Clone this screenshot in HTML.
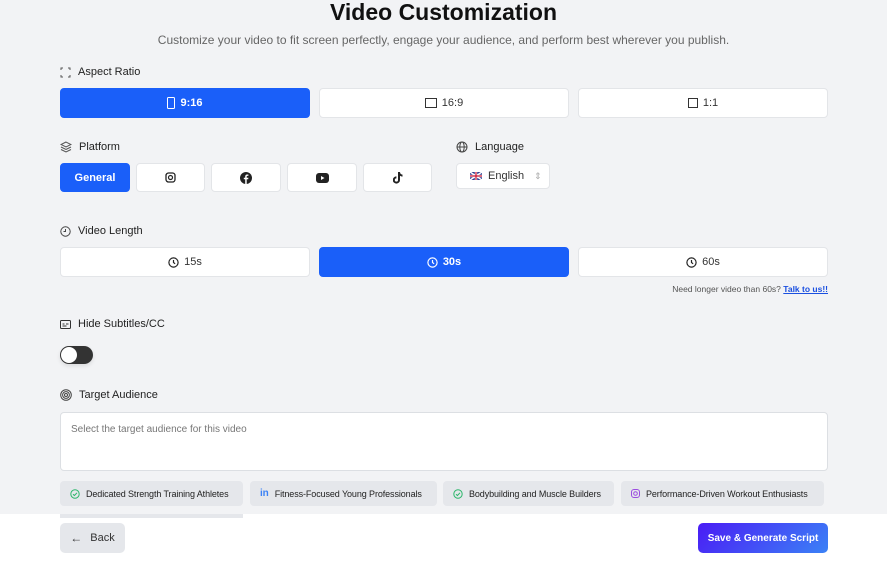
<!DOCTYPE html>
<html><head><style>
*{box-sizing:border-box;margin:0;padding:0}
body{width:887px;height:562px;background:#f2f3f5;font-family:"Liberation Sans",sans-serif;color:#222;position:relative;overflow:hidden}
.a{position:absolute}
.btn{position:absolute;background:#fff;border:1px solid #e3e5e8;border-radius:4px;display:flex;align-items:center;justify-content:center;font-size:11px;color:#333;gap:5px}
.on{background:#1a5ff9;border-color:#1a5ff9;color:#fff;font-weight:bold}
.lbl{position:absolute;font-size:11px;color:#222;display:flex;align-items:center;gap:7px}
.chip{position:absolute;top:481px;height:25px;background:#e5e7eb;border-radius:4px;font-size:9px;display:flex;align-items:center;gap:6px;padding-left:10px;color:#222;letter-spacing:-0.1px}
svg{display:block}
</style></head><body>
<div class="a" style="left:0;width:887px;top:-1px;text-align:center;font-size:23px;font-weight:bold;color:#111">Video Customization</div>
<div class="a" style="left:0;width:887px;top:33px;text-align:center;font-size:12px;color:#666">Customize your video to fit screen perfectly, engage your audience, and perform best wherever you publish.</div>

<div class="lbl" style="left:60px;top:66px"><svg width="11" height="11" viewBox="0 0 11 11" fill="none" stroke="#555"><path d="M1 3V1h2M8 1h2v2M10 8v2H8M3 10H1V8"/></svg>Aspect Ratio</div>
<div class="btn on" style="left:60px;top:88px;width:250px;height:30px"><svg width="8" height="12"><rect x=".5" y=".5" width="7" height="11" rx="1" fill="none" stroke="#fff"/></svg>9:16</div>
<div class="btn" style="left:319px;top:88px;width:250px;height:30px"><svg width="12" height="10"><rect x=".5" y=".5" width="11" height="9" fill="none" stroke="#333"/></svg>16:9</div>
<div class="btn" style="left:578px;top:88px;width:250px;height:30px"><svg width="10" height="10"><rect x=".5" y=".5" width="9" height="9" fill="none" stroke="#333"/></svg>1:1</div>

<div class="lbl" style="left:60px;top:141px"><svg width="12" height="12" viewBox="0 0 12 12" fill="none" stroke="#555"><path d="M6 1L1 3.5 6 6l5-2.5zM1 6l5 2.5L11 6M1 8.5L6 11l5-2.5"/></svg>Platform</div>
<div class="btn on" style="left:60px;top:163px;width:70px;height:29px">General</div>
<div class="btn" style="left:136px;top:163px;width:69px;height:29px"><svg width="11" height="11"><rect x="1" y="1" width="9" height="9" rx="2.5" fill="none" stroke="#222" stroke-width="1.3"/><circle cx="5.5" cy="5.5" r="2" fill="none" stroke="#222" stroke-width="1.2"/></svg></div>
<div class="btn" style="left:211px;top:163px;width:70px;height:29px"><svg width="12" height="12"><circle cx="6" cy="6" r="6" fill="#222"/><path d="M6.7 12V7.3h1.5l.2-1.6H6.7v-1c0-.5.2-.8.8-.8h.9V2.5H7.2C5.9 2.5 5.2 3.3 5.2 4.6v1.1H3.8v1.6h1.4V12z" fill="#fff"/></svg></div>
<div class="btn" style="left:287px;top:163px;width:70px;height:29px"><svg width="13" height="10"><rect width="13" height="10" rx="3" fill="#222"/><path d="M5 3v4l3.5-2z" fill="#fff"/></svg></div>
<div class="btn" style="left:363px;top:163px;width:69px;height:29px"><svg width="10" height="12" viewBox="0 0 10 12"><path d="M5 0h2c0 1.5 1 2.5 2.5 2.6v2C8.3 4.6 7.6 4.2 7 3.8V8a3.6 3.6 0 1 1-3.6-3.6v2A1.6 1.6 0 1 0 5 8z" fill="#222"/></svg></div>

<div class="lbl" style="left:456px;top:141px"><svg width="12" height="12" viewBox="0 0 12 12" fill="none" stroke="#444"><circle cx="6" cy="6" r="5"/><ellipse cx="6" cy="6" rx="2.2" ry="5"/><path d="M1 6h10"/></svg>Language</div>
<div class="btn" style="left:456px;top:163px;width:94px;height:26px;justify-content:flex-start;padding-left:13px;gap:6px"><svg width="12" height="8"><rect width="12" height="8" fill="#2a3f8f"/><path d="M0 0l12 8M12 0L0 8" stroke="#fff" stroke-width="1.5"/><path d="M6 0v8M0 4h12" stroke="#fff" stroke-width="2.4"/><path d="M6 0v8M0 4h12" stroke="#c8102e" stroke-width="1.2"/></svg>English<span style="color:#aaa;font-size:9px;margin-left:4px">⇕</span></div>

<div class="lbl" style="left:60px;top:225px"><svg width="11" height="11" viewBox="0 0 11 11" fill="none" stroke="#444"><circle cx="5.5" cy="5.5" r="4.7"/><path d="M5.5 3v2.5H3.5"/></svg>Video Length</div>
<div class="btn" style="left:60px;top:247px;width:250px;height:30px"><svg width="11" height="11" viewBox="0 0 11 11" fill="none" stroke="#222" stroke-width="1.2"><circle cx="5.5" cy="5.5" r="4.6"/><path d="M5.5 3v2.5l1.6 1.3"/></svg>15s</div>
<div class="btn on" style="left:319px;top:247px;width:250px;height:30px"><svg width="11" height="11" viewBox="0 0 11 11" fill="none" stroke="#fff" stroke-width="1.2"><circle cx="5.5" cy="5.5" r="4.6"/><path d="M5.5 3v2.5l1.6 1.3"/></svg>30s</div>
<div class="btn" style="left:578px;top:247px;width:250px;height:30px"><svg width="11" height="11" viewBox="0 0 11 11" fill="none" stroke="#222" stroke-width="1.2"><circle cx="5.5" cy="5.5" r="4.6"/><path d="M5.5 3v2.5l1.6 1.3"/></svg>60s</div>
<div class="a" style="right:59px;top:284px;font-size:8.5px;color:#555">Need longer video than 60s? <span style="color:#1a4fe0;text-decoration:underline;font-weight:bold">Talk to us!!</span></div>

<div class="lbl" style="left:60px;top:318px"><svg width="11" height="9" viewBox="0 0 11 9" fill="none" stroke="#333"><rect x=".5" y=".5" width="10" height="8" rx="1"/><path d="M2.5 4h2M6 4h2.5M2.5 6h4"/></svg>Hide Subtitles/CC</div>
<div class="a" style="left:60px;top:346px;width:33px;height:18px;border-radius:9px;background:#333;box-shadow:0 2px 4px rgba(0,0,0,.1)"><div class="a" style="left:1px;top:1px;width:16px;height:16px;border-radius:50%;background:#fff"></div></div>

<div class="lbl" style="left:60px;top:389px"><svg width="12" height="12" viewBox="0 0 12 12" fill="none" stroke="#444"><circle cx="6" cy="6" r="5.3"/><circle cx="6" cy="6" r="3.4"/><circle cx="6" cy="6" r="1.5"/></svg>Target Audience</div>
<div class="a" style="left:60px;top:412px;width:768px;height:59px;background:#fff;border:1px solid #dcdfe3;border-radius:4px;padding:11px 10px;font-size:10px;color:#777">Select the target audience for this video</div>

<div class="chip" style="left:60px;width:183px"><svg width="10" height="10" viewBox="0 0 10 10" fill="none" stroke="#2bb66a"><circle cx="5" cy="5" r="4.2"/><path d="M3 5.2l1.4 1.3L7 3.8"/></svg>Dedicated Strength Training Athletes</div>
<div class="chip" style="left:250px;width:187px"><span style="color:#3b82f6;font-weight:bold;font-size:10px">in</span>Fitness-Focused Young Professionals</div>
<div class="chip" style="left:443px;width:171px"><svg width="10" height="10" viewBox="0 0 10 10" fill="none" stroke="#2bb66a"><circle cx="5" cy="5" r="4.2"/><path d="M3 5.2l1.4 1.3L7 3.8"/></svg>Bodybuilding and Muscle Builders</div>
<div class="chip" style="left:621px;width:203px"><svg width="9" height="9" viewBox="0 0 9 9" fill="none" stroke="#9b4de0"><rect x=".5" y=".5" width="8" height="8" rx="2.5"/><circle cx="4.5" cy="4.5" r="1.8"/></svg>Performance-Driven Workout Enthusiasts</div>

<div class="a" style="left:0;top:514px;width:887px;height:48px;background:#fff"></div>
<div class="a" style="left:60px;top:514px;width:183px;height:4px;background:#e5e7eb"></div>
<div class="btn" style="left:60px;top:523px;width:65px;height:30px;background:#e5e7eb;border:none;border-radius:5px;gap:8px"><span style="font-size:12px">←</span>Back</div>
<div class="btn" style="left:698px;top:523px;width:130px;height:30px;border:none;border-radius:5px;background:linear-gradient(135deg,#4a1cf5,#3b82f6);color:#fff;font-weight:bold;font-size:10px">Save &amp; Generate Script</div>
</body></html>
